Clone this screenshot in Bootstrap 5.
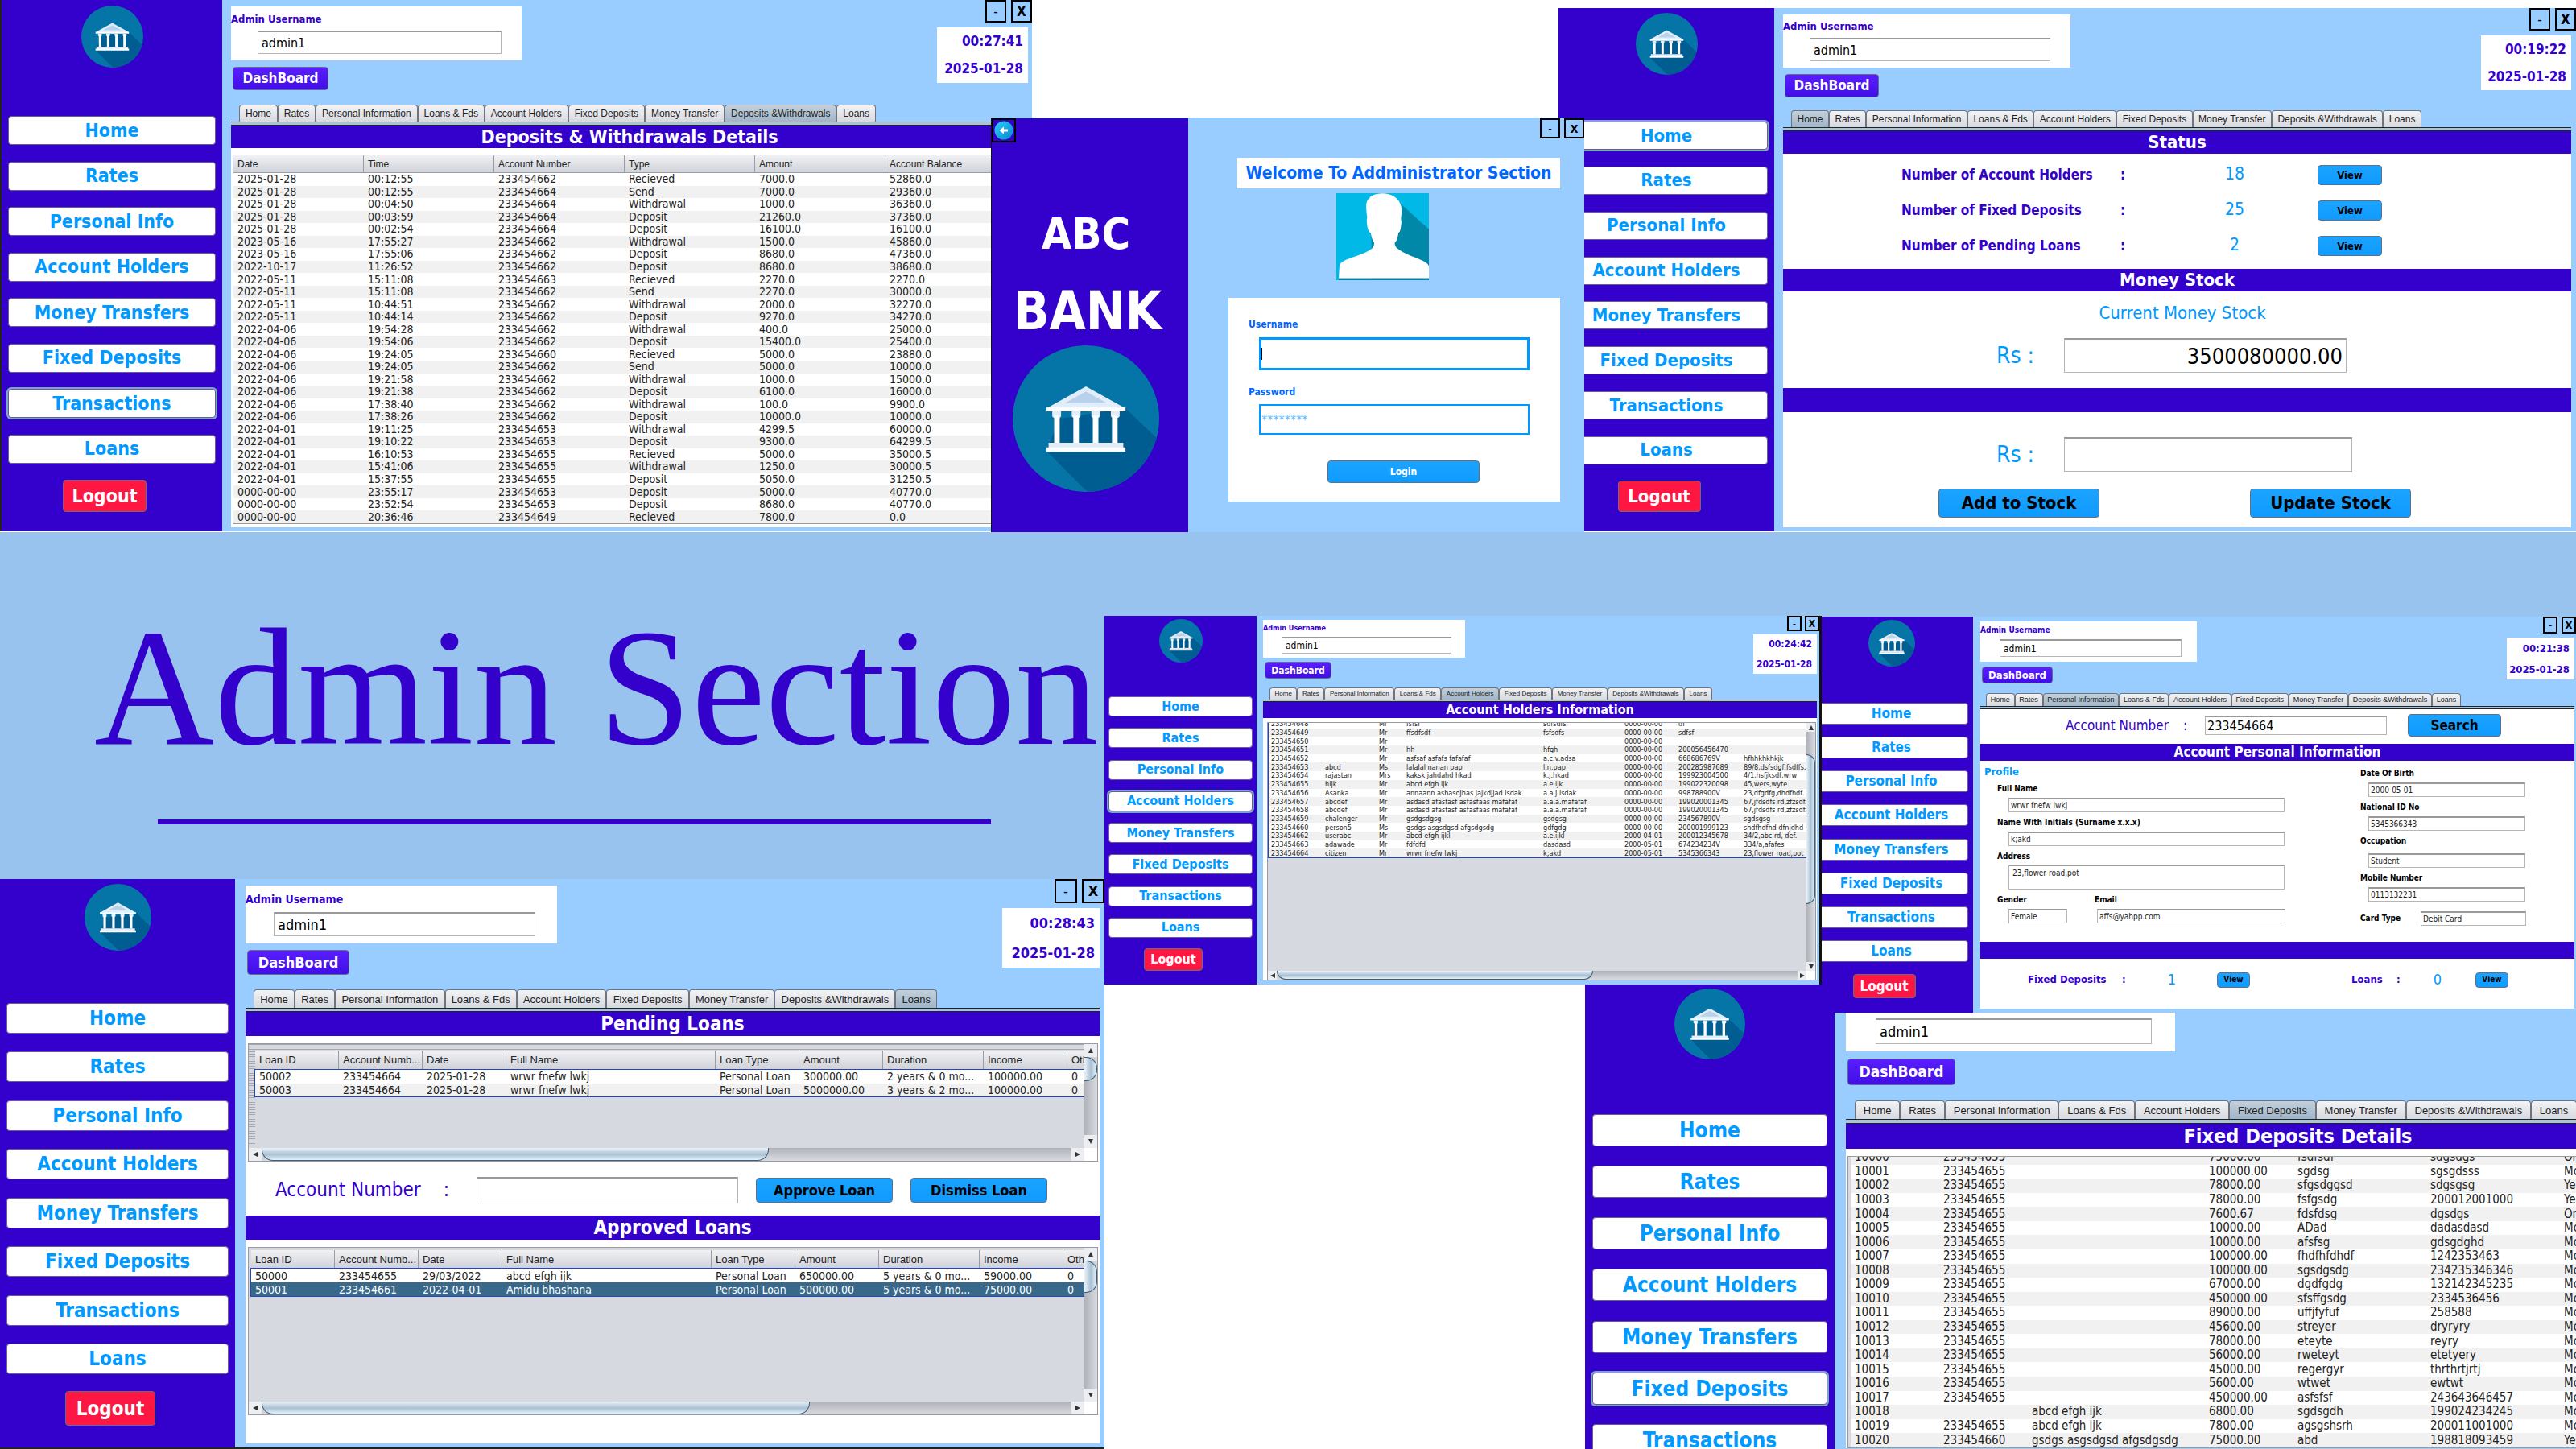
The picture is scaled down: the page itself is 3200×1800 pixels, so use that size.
<!DOCTYPE html>
<html lang="en">
<head>
<meta charset="utf-8">
<meta name="viewport" content="width=device-width, initial-scale=1">
<title>ABC Bank - Admin Section</title>
<link rel="stylesheet" href="https://cdn.jsdelivr.net/npm/bootstrap@5.3.0/dist/css/bootstrap.min.css">
<style>
:root{--ink:#3300cc;--sky:#99ccff;--azure:#0099ff}
body{background:#fff;color:#222;font-family:"DejaVu Sans Condensed","DejaVu Sans","Noto Sans",sans-serif;line-height:1.2}
.desk{position:relative;min-height:100vh;overflow:hidden;background:#fff}
.desk .btn{padding:0;line-height:1;border:1px solid #5f6f86;border-radius:4px;font-weight:700;white-space:nowrap}
.win{position:absolute;display:flex;background:var(--sky)}

/* section banner */
.banner{position:absolute;left:0;right:0;top:661px;height:431px;background:#99c3ef;padding:90px 0 0 117px}
.banner h1{font-family:"Liberation Serif",serif;font-size:207px;line-height:207px;color:var(--ink);margin:0;font-weight:400;white-space:nowrap}
.banner hr{width:1035px;height:6px;margin:60px 0 0 79px;border:0;background:var(--ink);opacity:1}

/* window placement and the sizes of each copy of the console */
.w-dep{left:0;top:0;right:1918px;min-height:660px;border-left:2px solid #222;
--side:274px;--inset:8px;--lt:7px;--logo:77px;--ng:60px;--nh:432px;--bh:36px;--nf:23px;--og:20px;--oh:40px;--ow:104px;
--pl:11px;--pr:5px;--ut:8px;--uh:67px;--uw:361px;--lf:13px;--im:33px;--iw:303px;--ih:29px;--if:16px;--ib:8px;
--dw:119px;--dh:29px;--df:17px;--tt:130px;--th:21px;--tm:10px;--tw:791px;--tf:12px;--sh:5px;--hh:28px;--hf:23px;
--cw:113px;--ch:69px;--cf:17px;--xw:26px;--xh:28px;--xg:6px}
.w-home{left:1936px;top:10px;right:0;min-height:650px;
--side:268px;--inset:8px;--lt:6px;--logo:77px;--ng:58px;--nh:426px;--bh:35px;--nf:22px;--og:20px;--oh:39px;--ow:103px;
--pl:11px;--pr:6px;--ut:8px;--uh:66px;--uw:357px;--lf:13px;--im:33px;--iw:299px;--ih:29px;--if:16px;--ib:8px;
--dw:117px;--dh:29px;--df:17px;--tt:127px;--th:21px;--tm:10px;--tw:783px;--tf:12px;--sh:5px;--hh:28px;--hf:22px;
--cw:112px;--ch:68px;--cf:17px;--xw:26px;--xh:28px;--xg:6px}
.w-hold{left:1372px;top:765px;right:937px;min-height:457px;border-right:3px solid #111;
--side:189px;--inset:5px;--lt:4px;--logo:54px;--ng:42px;--nh:300px;--bh:25px;--nf:16px;--og:13px;--oh:28px;--ow:73px;
--pl:8px;--pr:3px;--ut:5px;--uh:47px;--uw:251px;--lf:9px;--im:23px;--iw:211px;--ih:21px;--if:12px;--ib:5px;
--dw:83px;--dh:21px;--df:12px;--tt:89px;--th:15px;--tm:8px;--tw:550px;--tf:8px;--sh:3px;--hh:20px;--hf:16px;
--cw:79px;--ch:49px;--cf:12px;--xw:18px;--xh:19px;--xg:4px}
.w-pers{left:2248px;top:766px;right:0;min-height:491px;
--side:203px;--inset:6px;--lt:4px;--logo:58px;--ng:45px;--nh:322px;--bh:27px;--nf:17px;--og:15px;--oh:30px;--ow:78px;
--pl:9px;--pr:2px;--ut:6px;--uh:50px;--uw:269px;--lf:10px;--im:24px;--iw:226px;--ih:22px;--if:12px;--ib:6px;
--dw:88px;--dh:21px;--df:13px;--tt:95px;--th:16px;--tm:7px;--tw:590px;--tf:9px;--sh:4px;--hh:21px;--hf:17px;
--cw:84px;--ch:52px;--cf:13px;--xw:18px;--xh:21px;--xg:5px}
.w-loan{left:0;top:1092px;right:1828px;min-height:708px;border-bottom:2px solid #222;
--side:292px;--inset:8px;--lt:6px;--logo:83px;--ng:65px;--nh:461px;--bh:38px;--nf:24px;--og:21px;--oh:43px;--ow:112px;
--pl:13px;--pr:6px;--ut:8px;--uh:72px;--uw:387px;--lf:14px;--im:35px;--iw:325px;--ih:30px;--if:18px;--ib:9px;
--dw:127px;--dh:31px;--df:18px;--tt:137px;--th:23px;--tm:10px;--tw:849px;--tf:13px;--sh:5px;--hh:30px;--hf:24px;
--cw:121px;--ch:74px;--cf:18px;--xw:28px;--xh:30px;--xg:6px}
.w-fix{left:1969px;top:1222px;right:-222px;bottom:0;
--side:310px;--inset:9px;--lt:6px;--logo:88px;--ng:68px;--nh:489px;--bh:40px;--nf:26px;--og:22px;--oh:45px;--ow:118px;
--pl:14px;--pr:6px;--ut:9px;--uh:75px;--uw:409px;--lf:14px;--im:37px;--iw:343px;--ih:32px;--if:18px;--ib:9px;
--dw:134px;--dh:33px;--df:19px;--tt:145px;--th:23px;--tm:11px;--tw:897px;--tf:13px;--sh:6px;--hh:31px;--hf:25px;
--cw:128px;--ch:78px;--cf:19px;--xw:29px;--xh:32px;--xg:7px}

/* sidebar */
.side{flex:0 0 var(--side);background:var(--ink);padding:var(--lt) var(--inset) 0;display:flex;flex-direction:column;align-items:center}
.side svg{flex:none;width:var(--logo);height:var(--logo)}
.side-nav{align-self:stretch;margin-top:var(--ng);height:var(--nh);flex:none;display:flex;flex-direction:column;justify-content:space-between}
.side-nav .btn{height:var(--bh);background:#fff!important;color:var(--azure);font-size:var(--nf);border-color:#6b5a9a}
.side-nav .btn.on{box-shadow:0 0 0 2px #7ba6c9;color:var(--azure)}
.desk .btn.out{flex:none;margin:var(--og) 18px 0 0;width:var(--ow);height:var(--oh);font-size:var(--nf);background:#ff1744;color:#fff}

/* console header */
.main{flex:1 1 0;min-width:0;display:flex;flex-direction:column}
.head{height:var(--tt);flex:none;display:flex;justify-content:space-between;align-items:flex-start;padding-left:var(--pl)}
.ubox{margin-top:var(--ut);width:var(--uw);height:var(--uh);background:#fff;display:flex;flex-direction:column;padding-bottom:var(--ib)}
.ubox label{flex:1;display:flex;align-items:center;font-weight:700;font-size:var(--lf);color:var(--ink);line-height:1}
.fld{border:1px solid #b5b5b5;border-top:2px solid #999;border-radius:0;background:#fff;color:#000;padding:0 4px;min-width:0;display:block}
.ubox .fld{margin-left:var(--im);width:var(--iw);height:var(--ih);font-size:var(--if)}
.desk .btn.dash{margin:var(--ut) 0 0 2px;width:var(--dw);height:var(--dh);font-size:var(--df);color:#fff;background:linear-gradient(#5a1eff,#410ee6)}
.wctl{display:flex;justify-content:flex-end;gap:var(--xg)}
.desk .wctl .btn{width:var(--xw);height:var(--xh);border:2px solid #000;border-radius:0;font-size:var(--cf);color:#000}
.desk .wctl .btn:first-child{font-weight:400}
.clock{margin:var(--xg) var(--pr) 0 auto;width:var(--cw);height:var(--ch);background:#fff;color:var(--ink);font-weight:700;font-size:var(--cf);line-height:1;display:flex;flex-direction:column;justify-content:space-around;align-items:flex-end;padding-right:6px}
.tabs{flex:none;height:var(--th);width:var(--tw);margin-left:calc(var(--pl) + var(--tm));display:flex}
.tabs button{flex:1 1 auto;padding:0;border:1px solid #6f747c;border-bottom:0;border-radius:4px 4px 0 0;background:linear-gradient(#f3f3f5,#d6d9df);font:var(--tf)/1 "Liberation Sans",Arial,sans-serif;color:#222;white-space:nowrap}
.tabs button.on{background:linear-gradient(#c3d0db,#a0b5c9)}
.rule{flex:none;height:var(--sh);margin:0 var(--pr) 0 var(--pl);background:#a9c3d8;border-top:1px solid #222;border-bottom:1px solid #222}
.body{flex:1;margin:0 var(--pr) 5px var(--pl);background:#fff;display:flex;flex-direction:column;min-width:0}
.bar{flex:none;height:var(--hh);background:var(--ink);color:#fff;font-weight:700;font-size:var(--hf);line-height:var(--hh);text-align:center;margin:0}

/* tables and scroll panes */
.pane{position:relative;border:1px solid #979aa3;background:#d6d9e0;overflow:hidden;display:grid}
.pane.bars{grid-template-columns:minmax(0,1fr) var(--sb);grid-template-rows:minmax(0,1fr) var(--sb)}
.view{overflow:hidden;min-width:0}
.grid-t{table-layout:fixed;border-collapse:separate;border-spacing:0;background:#fff;color:#222}
.grid-t td,.grid-t th{padding:0 0 0 5px;white-space:nowrap;overflow:hidden}
.grid-t th{font:400 var(--tf)/1 "Liberation Sans",Arial,sans-serif;background:linear-gradient(#f2f2f4,#cfd2d9);border-right:1px solid #9a9da6;border-bottom:1px solid #9a9da6;height:var(--hd);text-overflow:ellipsis}
.grid-t td{font-size:var(--fs);line-height:var(--lh)}
.grid-t tbody tr:nth-child(even) td{background:#f1f1f1}
.grid-t tbody tr.pick td{background:#39698a;color:#fff}
.p-dep{--fs:14px;--lh:15px;--hd:22px;margin:8px 0 0 2px}
.p-dep .grid-t{height:457px}
.p-hold{--fs:9px;--lh:10px;--sb:11px;margin:5px 1px 0 5px;height:321px}
.p-hold .grid-t{height:172px;margin-top:-4px;border-bottom:1px solid #2046c8;border-left:1px solid #2046c8}
.p-hold .grid-t td{padding-left:3px}
.p-fix{--fs:15px;--lh:17px;margin:9px 0 0 2px;padding-left:3px;flex:1}
.p-fix .grid-t{height:369px;margin-top:-8px}
.p-fix .grid-t tbody tr:nth-child(odd) td{background:#f1f1f1}
.p-fix .grid-t tbody tr:nth-child(even) td{background:#fff}
.p-pend,.p-appr{--fs:14px;--lh:16px;--sb:16px;margin:9px 2px 0 3px}
.p-pend{--hd:24px;height:147px}
.p-pend .view{padding:8px 0 0 8px;background:repeating-linear-gradient(#a4a7af 0 1px,#d6d9e0 1px 3px)}
.p-pend .fill{background:#d6d9e0;height:100%}
.p-appr{--hd:23px;height:209px}
.p-appr .view{padding:3px 0 0 3px}
.p-pend tbody,.p-appr tbody{outline:1px solid #2046c8}
.p-pend .grid-t,.p-appr .grid-t{height:57px}
.hbar,.vbar{display:flex;background:linear-gradient(#aeb1b8,#d9dbe0)}
.vbar{flex-direction:column;background:linear-gradient(90deg,#aeb1b8,#d9dbe0)}
.hbar i,.vbar i{flex:none;background:#eceef1;display:flex;align-items:center;justify-content:center}
.hbar i{width:var(--sb)}.vbar i{height:var(--sb)}
.hbar svg,.vbar svg{width:8px;height:8px;fill:#333}
.knob{flex:none;border:1px solid #3e5e78;background:linear-gradient(#eaf2f8,#a9c1d4 55%,#e3f3fb)}
.hbar .knob{border-top:0;border-radius:0 0 14px 14px}
.vbar .knob{border-left:0;border-radius:0 14px 14px 0;background:linear-gradient(90deg,#eaf2f8,#a9c1d4 55%,#e3f3fb)}
.corner{background:#fff}
.p-pend .hbar .knob{width:630px}.p-appr .hbar .knob{width:681px}.p-hold .hbar .knob{width:393px}
.p-pend .vbar .knob{height:30px}.p-appr .vbar .knob{height:40px}.p-hold .vbar .knob{height:186px;margin-top:28px}
.desk .btn.blue{background:linear-gradient(#1ba3ff,#0f9bff);color:#000}
.t-az{color:var(--azure)}

/* home status */
.st-rows{height:143px;padding:4px 0 0 147px}
.st-row{display:flex;align-items:center;height:44px;font-size:17px;font-weight:700;color:var(--ink)}
.st-row span:nth-child(1){width:272px}.st-row span:nth-child(2){width:39px}
.st-row span:nth-child(3){width:206px;text-align:center;font-size:21px;font-weight:400;color:var(--azure)}
.st-row .btn{width:80px;height:25px;font-size:13px}
.stock{height:120px;padding-top:13px}
.stock p{font-size:22px;line-height:28px;margin:0 0 17px 13px;text-align:center}
.rs{display:flex;align-items:center;padding-left:265px}
.rs label{width:84px;font-size:28px;line-height:1;color:var(--azure)}
.rs .fld{height:43px;font-size:27px;text-align:right}
.f-now{width:351px}.f-add{width:358px}
.blank{height:30px}
.more{padding-top:31px}
.acts{display:flex;gap:187px;padding:21px 0 0 193px}
.acts .btn{width:200px;height:36px;font-size:22px}

/* loans */
.decide{height:67px;display:flex;align-items:center;padding:4px 0 0 37px}
.decide label{width:250px;font-size:24px;color:var(--ink);display:flex;gap:28px;white-space:nowrap}
.decide .fld{width:325px;height:33px;font-size:20px}
.decide .btn{width:170px;height:31px;font-size:18px;margin-left:22px}

/* personal information */
.find{height:43px;padding:0 0 3px 106px;display:flex;align-items:center}
.find label{width:173px;font-size:17px;color:var(--ink);display:flex;gap:18px;white-space:nowrap}
.find .fld{width:226px;height:24px;font-size:16px;padding:0 2px}
.find .btn{width:116px;height:28px;font-size:17px;margin-left:26px}
.prof{height:225px;display:flex}
.p-left{width:472px;padding:6px 0 0 5px}
.p-left h3{font-size:13px;line-height:16px;margin:0 0 3px;font-weight:700;color:var(--azure)}
.p-left .grp{margin:7px 0 0 16px}
.p-left .grp .fld{margin-left:14px}
.grp label,.p-card label{display:block;font-size:10px;line-height:12px;font-weight:700;color:#000;margin-bottom:5px;white-space:nowrap}
.prof .fld{height:18px;font-size:10px;padding:0 2px;color:#222}
.prof textarea.fld{height:30px;resize:none;overflow:hidden;line-height:14px;padding:2px 4px;border-top-width:1px}
.f-wide{width:343px}.f-gen{width:73px}.f-mail{width:234px}
.p-left .grp.mail{margin-left:34px}
.p-left .grp.mail .fld{margin-left:3px}
.p-right{padding-top:10px}
.p-right .grp{margin-bottom:7px}
.p-right .grp .fld{width:195px;margin-left:10px}
.p-right .grp.roomy label{margin-bottom:9px}
.p-card{display:flex;align-items:center;margin-top:12px}
.p-card label{width:75px;margin:0}
.p-card .fld{width:131px}
.tally{height:62px;padding:0 0 10px 59px;display:flex;align-items:center;font-size:13px;font-weight:700;color:var(--ink)}
.tally b{width:117px}.tally b.sm{width:56px;margin-left:126px}
.tally i{width:24px;font-style:normal}
.tally em{width:76px;margin-right:18px;font:400 18px/1 "DejaVu Sans Condensed","DejaVu Sans",sans-serif;color:var(--azure);text-align:center}
.tally b.sm~i{width:20px}.tally b.sm~em{width:62px;margin-right:16px}
.tally .btn{width:41px;height:19px;font-size:10px}

/* login */
.w-log{left:1231px;top:146px;right:1232px;height:515px;border-left:1px solid #111;border-top:1px solid #7fb2e6;--xw:25px;--xh:25px;--xg:5px;--cf:14px}
.l-side{width:244px;flex:none;background:var(--ink);color:#fff;display:flex;flex-direction:column;align-items:center;padding-right:10px}
.desk .btn.back{align-self:flex-start;width:30px;height:30px;border:2px solid #000;border-radius:0;display:flex;align-items:center;justify-content:center}
.l-side b{font-size:54px;line-height:64px;margin-top:82px}
.l-side b+b{font-size:65px;line-height:76px;margin:26px 0 4px;padding-left:4px}
.l-main{flex:1;display:flex;flex-direction:column;align-items:flex-end}
.l-title{margin:24px 30px 0 0;width:401px;height:38px;line-height:38px;background:#fff;text-align:center;font-size:21px;font-weight:700;color:#0066ff;white-space:nowrap}
.face{margin:6px 193px 0 0;width:115px;height:108px}
.l-form{margin:22px 30px 0 0;width:412px;height:253px;background:#fff;padding:25px 0 0 25px}
.l-form label{display:block;font-size:12px;line-height:16px;font-weight:700;color:#0066ff}
.l-form input{display:block;border:2px solid var(--azure);border-radius:0;width:336px;height:38px;margin:7px 0 0 13px;padding:0 1px;font-size:16px;color:#4db5ff}
.l-form input::placeholder{color:#66bdff;opacity:1}
.l-form .caret{position:relative;margin:8px 0 19px 13px}
.l-form .caret input{height:41px;border-width:3px;margin:0}
.l-form .caret::after{content:"";position:absolute;left:3px;top:13px;width:1px;height:15px;background:#000}
.desk .btn.login{margin:32px 0 0 98px;width:189px;height:28px;font-size:12px;color:#fff}
</style>
<script src="https://cdn.jsdelivr.net/npm/bootstrap@5.3.0/dist/js/bootstrap.bundle.min.js"></script>
</head>
<body>
<svg class="d-none" aria-hidden="true">
<symbol id="bank" viewBox="0 0 100 100">
<circle cx="50" cy="50" r="50" fill="#0575a7"/>
<path d="M77 43 98 63A50 50 0 0 1 51 100L23 72 32 50Z" fill="#005d92"/>
<path d="M50 28 77 43H23Z" fill="#e1edf8"/><path d="M50 31.500 64.500 39.500H35.500Z" fill="#b9d1ea"/>
<path d="M23 42.400H77V45H23Z" fill="#fff"/>
<path d="M27 45h6v3.500l-1 1h-4l-1-1zM40.300 45h6v3.500l-1 1h-4l-1-1zM53.700 45h6v3.500l-1 1h-4l-1-1zM67 45h6v3.500l-1 1h-4l-1-1z" fill="#e1edf8"/>
<path d="M28.300 48h3.800v19h-3.800zM41.400 48h3.800v19h-3.800zM54.700 48h3.800v19h-3.800zM67.800 48h3.800v19h-3.800z" fill="#fff"/>
<path d="M24.500 66.500H75.500V70H24.500Z" fill="#e1edf8"/><path d="M23 69.600H77V72.500H23Z" fill="#fff"/>
</symbol>
<symbol id="tl" viewBox="0 0 8 8"><path d="M7 1V7L1 4Z"/></symbol>
<symbol id="tr" viewBox="0 0 8 8"><path d="M1 1V7L7 4Z"/></symbol>
<symbol id="tu" viewBox="0 0 8 8"><path d="M1 7H7L4 1Z"/></symbol>
<symbol id="td" viewBox="0 0 8 8"><path d="M1 1H7L4 7Z"/></symbol>
</svg>

<div class="desk">
  <section class="banner"><h1>Admin Section</h1><hr></section>

  <!-- Fixed deposits -->
  <section class="win w-fix" data-id="fix" data-nav="Fixed Deposits" data-tab="Fixed Deposits" data-time="00:25:50">
    <div class="body">
      <h2 class="bar">Fixed Deposits Details</h2>
      <div class="pane p-fix"><div class="view"><table class="grid-t" data-table="fix"></table></div></div>
    </div>
  </section>

  <!-- Personal information -->
  <section class="win w-pers" data-id="pers" data-nav="" data-tab="Personal Information" data-time="00:21:38">
    <div class="body">
      <div class="find"><label for="p-acc"><span>Account Number</span><span>:</span></label><input class="fld" id="p-acc" value="233454664"><button class="btn blue">Search</button></div>
      <h2 class="bar">Account Personal Information</h2>
      <div class="prof">
        <div class="p-left">
          <h3>Profile</h3>
          <div class="grp"><label for="p-fn">Full Name</label><input class="fld f-wide" id="p-fn" value="wrwr fnefw lwkj"></div>
          <div class="grp"><label for="p-in">Name With Initials (Surname x.x.x)</label><input class="fld f-wide" id="p-in" value="k;akd"></div>
          <div class="grp"><label for="p-ad">Address</label><textarea class="fld f-wide" id="p-ad">23,flower road,pot</textarea></div>
          <div class="d-flex">
            <div class="grp"><label for="p-ge">Gender</label><input class="fld f-gen" id="p-ge" value="Female"></div>
            <div class="grp mail"><label for="p-em">Email</label><input class="fld f-mail" id="p-em" value="affs@yahpp.com"></div>
          </div>
        </div>
        <div class="p-right">
          <div class="grp"><label for="p-db">Date Of Birth</label><input class="fld" id="p-db" value="2000-05-01"></div>
          <div class="grp"><label for="p-ni">National ID No</label><input class="fld" id="p-ni" value="5345366343"></div>
          <div class="grp roomy"><label for="p-oc">Occupation</label><input class="fld" id="p-oc" value="Student"></div>
          <div class="grp"><label for="p-mo">Mobile Number</label><input class="fld" id="p-mo" value="0113132231"></div>
          <div class="p-card"><label for="p-ct">Card Type</label><input class="fld" id="p-ct" value="Debit Card"></div>
        </div>
      </div>
      <div class="bar"></div>
      <div class="tally"><b>Fixed Deposits</b><i>:</i><em>1</em><button class="btn blue">View</button><b class="sm">Loans</b><i>:</i><em>0</em><button class="btn blue">View</button></div>
    </div>
  </section>

  <!-- Account holders -->
  <section class="win w-hold" data-id="hold" data-nav="Account Holders" data-tab="Account Holders" data-time="00:24:42">
    <div class="body">
      <h2 class="bar">Account Holders Information</h2>
      <div class="pane bars p-hold"><div class="view"><table class="grid-t" data-table="hold"></table></div></div>
    </div>
  </section>

  <!-- Loans -->
  <section class="win w-loan" data-id="loan" data-nav="" data-tab="Loans" data-time="00:28:43">
    <div class="body">
      <h2 class="bar">Pending Loans</h2>
      <div class="pane bars p-pend"><div class="view"><div class="fill"><table class="grid-t" data-table="pend"></table></div></div></div>
      <div class="decide"><label for="l-acc"><span>Account Number</span><span>:</span></label><input class="fld" id="l-acc"><button class="btn blue">Approve Loan</button><button class="btn blue">Dismiss Loan</button></div>
      <h2 class="bar">Approved Loans</h2>
      <div class="pane bars p-appr"><div class="view"><table class="grid-t" data-table="appr"></table></div></div>
    </div>
  </section>

  <!-- Deposits and withdrawals -->
  <section class="win w-dep" data-id="dep" data-nav="Transactions" data-tab="Deposits &amp;Withdrawals" data-time="00:27:41">
    <div class="body">
      <h2 class="bar">Deposits &amp; Withdrawals Details</h2>
      <div class="pane p-dep"><div class="view"><table class="grid-t" data-table="dep"></table></div></div>
    </div>
  </section>

  <!-- Home -->
  <section class="win w-home" data-id="home" data-nav="Home" data-tab="Home" data-time="00:19:22">
    <div class="body">
      <h2 class="bar">Status</h2>
      <div class="st-rows">
        <div class="st-row"><span>Number of Account Holders</span><span>:</span><span>18</span><button class="btn blue">View</button></div>
        <div class="st-row"><span>Number of Fixed Deposits</span><span>:</span><span>25</span><button class="btn blue">View</button></div>
        <div class="st-row"><span>Number of Pending Loans</span><span>:</span><span>2</span><button class="btn blue">View</button></div>
      </div>
      <h2 class="bar">Money Stock</h2>
      <div class="stock">
        <p class="t-az">Current Money Stock</p>
        <div class="rs"><label for="h-now">Rs :</label><input class="fld f-now" id="h-now" value="3500080000.00"></div>
      </div>
      <div class="bar blank"></div>
      <div class="more">
        <div class="rs"><label for="h-add">Rs :</label><input class="fld f-add" id="h-add"></div>
        <div class="acts"><button class="btn blue">Add to Stock</button><button class="btn blue">Update Stock</button></div>
      </div>
    </div>
  </section>

  <!-- Login -->
  <section class="win w-log">
    <div class="l-side">
      <button class="btn back" aria-label="Back"><svg width="24" height="24" viewBox="0 0 24 24"><defs><linearGradient id="g" x2="1" y2="1"><stop stop-color="#2fd0f5"/><stop offset="1" stop-color="#0585d0"/></linearGradient></defs><circle cx="12" cy="12" r="11.500" fill="url(#g)"/><path d="M6.500 12 12 7.500V10.500H17V13.500H12V16.500Z" fill="#fff"/></svg></button>
      <b>ABC</b><b>BANK</b>
      <svg width="182" height="182"><use href="#bank"/></svg>
    </div>
    <div class="l-main">
      <div class="wctl"><button class="btn">-</button><button class="btn">X</button></div>
      <div class="l-title">Welcome To Addministrator Section</div>
      <svg class="face" viewBox="0 0 237 313" preserveAspectRatio="none">
        <path d="M0 0H237V313H0Z" fill="#00b9e6"/><path d="M160 32 237 130V313H90V150Z" fill="#0088a8"/><path d="M6 306H237V313H6Z" fill="#0a7f9e"/>
        <path d="M118 1C98 1 86 12 85 18C74 26 76 55 79 88C76 100 80 142 88 142C90 155 91 168 97 178C97 200 85 205 75 213C40 235 8 240 8 265L6 306H237V262C232 240 190 230 165 207C155 200 148 190 150 178C156 170 158 155 159 142C165 140 165 120 167 104C164 92 167 85 167 65C169 25 145 1 118 1Z" fill="#fff"/>
      </svg>
      <form class="l-form">
        <label for="u">Username</label>
        <div class="caret"><input id="u" type="text"></div>
        <label for="pw">Password</label>
        <input id="pw" type="text" placeholder="********">
        <button type="button" class="btn blue login">Login</button>
      </form>
    </div>
  </section>
</div>

<script>
const NAV=["Home","Rates","Personal Info","Account Holders","Money Transfers","Fixed Deposits","Transactions","Loans"];
const TABS=["Home","Rates","Personal Information","Loans & Fds","Account Holders","Fixed Deposits","Money Transfer","Deposits &Withdrawals","Loans"];
const esc=s=>s.replace(/&/g,"&amp;");
const rows=s=>s.trim().split("\n").map(r=>r.split("|"));

const DATA={
dep:{cols:[162,162,162,162,162,172],head:"Date|Time|Account Number|Type|Amount|Account Balance".split("|"),rows:rows(`
2025-01-28|00:12:55|233454662|Recieved|7000.0|52860.0
2025-01-28|00:12:55|233454664|Send|7000.0|29360.0
2025-01-28|00:04:50|233454664|Withdrawal|1000.0|36360.0
2025-01-28|00:03:59|233454664|Deposit|21260.0|37360.0
2025-01-28|00:02:54|233454664|Deposit|16100.0|16100.0
2023-05-16|17:55:27|233454662|Withdrawal|1500.0|45860.0
2023-05-16|17:55:06|233454662|Deposit|8680.0|47360.0
2022-10-17|11:26:52|233454662|Deposit|8680.0|38680.0
2022-05-11|15:11:08|233454663|Recieved|2270.0|2270.0
2022-05-11|15:11:08|233454662|Send|2270.0|30000.0
2022-05-11|10:44:51|233454662|Withdrawal|2000.0|32270.0
2022-05-11|10:44:14|233454662|Deposit|9270.0|34270.0
2022-04-06|19:54:28|233454662|Withdrawal|400.0|25000.0
2022-04-06|19:54:06|233454662|Deposit|15400.0|25400.0
2022-04-06|19:24:05|233454660|Recieved|5000.0|23880.0
2022-04-06|19:24:05|233454662|Send|5000.0|10000.0
2022-04-06|19:21:58|233454662|Withdrawal|1000.0|15000.0
2022-04-06|19:21:38|233454662|Deposit|6100.0|16000.0
2022-04-06|17:38:40|233454662|Withdrawal|100.0|9900.0
2022-04-06|17:38:26|233454662|Deposit|10000.0|10000.0
2022-04-01|19:11:25|233454653|Withdrawal|4299.5|60000.0
2022-04-01|19:10:22|233454653|Deposit|9300.0|64299.5
2022-04-01|16:10:53|233454655|Recieved|5000.0|35000.5
2022-04-01|15:41:06|233454655|Withdrawal|1250.0|30000.5
2022-04-01|15:37:55|233454655|Deposit|5050.0|31250.5
0000-00-00|23:55:17|233454653|Deposit|5000.0|40770.0
0000-00-00|23:52:54|233454653|Deposit|8680.0|40770.0
0000-00-00|20:36:46|233454649|Recieved|7800.0|0.0`)},
hold:{cols:[67,67,34,170,101,67,81,90],rows:rows(`
233454648||Mr|fsfsf|sdfsdfs|0000-00-00|df|
233454649||Mr|ffsdfsdf|fsfsdfs|0000-00-00|sdfsf|
233454650||Mr|||0000-00-00||
233454651||Mr|hh|hfgh|0000-00-00|200056456470|
233454652||Mr|asfsaf asfafs fafafaf|a.c.v.adsa|0000-00-00|668686769V|hfhhkhkhkjk
233454653|abcd|Ms|lalalal nanan pap|l.n.pap|0000-00-00|200285987689|89/8,dsfsdgf,fsdffs.
233454654|rajastan|Mrs|kaksk jahdahd hkad|k.j.hkad|0000-00-00|199923004500|4/1,hsfjksdf,wrw
233454655|hijk|Mr|abcd efgh ijk|a.e.ijk|0000-00-00|199022320098|45,wers,wyte.
233454656|Asanka|Mr|annaann ashasdjhas jajkdjjad lsdak|a.a.j.lsdak|0000-00-00|998788900V|23,dfgdfg,dhdfhdf.
233454657|abcdef|Mr|asdasd afasfasf asfasfaas mafafaf|a.a.a.mafafaf|0000-00-00|199020001345|67,jfdsdfs rd,zfzsdf.
233454658|abcdef|Mr|asdasd afasfasf asfasfaas mafafaf|a.a.a.mafafaf|0000-00-00|199020001345|67,jfdsdfs rd,zfzsdf.
233454659|chalenger|Mr|gsdgsdgsg|gsdgsg|0000-00-00|234567890V|sgdsgsg
233454660|person5|Ms|gsdgs asgsdgsd  afgsdgsdg|gdfgdg|0000-00-00|200001999123|shdfhdfhd dfnjdhd d
233454662|userabc|Mr|abcd efgh ijkl|a.e.ijkl|2000-04-01|200012345678|34/2,abc rd, def.
233454663|adawade|Mr|fdfdfd|dasdasd|2000-05-01|674234234V|334/a,afafes
233454664|citizen|Mr|wrwr fnefw lwkj|k;akd|2000-05-01|5345366343|23,flower road,pot`)},
fix:{cols:[110,110,220,110,165,166,200],rows:rows(`
10000|233454655||75000.00|fsdfsdf|sdgsdgs|One Year
10001|233454655||100000.00|sgdsg|sgsgdsss|Month
10002|233454655||78000.00|sfgsdggsd|sdgsgsg|Year
10003|233454655||78000.00|fsfgsdg|200012001000|Year
10004|233454655||7600.67|fdsfdsg|dgsdgs|One Year
10005|233454655||10000.00|ADad|dadasdasd|Month
10006|233454655||10000.00|afsfsg|gdsgdghd|Month
10007|233454655||100000.00|fhdfhfdhdf|1242353463|Month
10008|233454655||100000.00|sgsdgsdg|234235346346|Month
10009|233454655||67000.00|dgdfgdg|132142345235|Month
10010|233454655||450000.00|sfsffgsdg|2334536456|Month
10011|233454655||89000.00|uffjfyfuf|258588|Month
10012|233454655||45600.00|streyer|dryryry|Month
10013|233454655||78000.00|eteyte|reyry|Month
10014|233454655||56000.00|rweteyt|etetyery|Month
10015|233454655||45000.00|regergyr|thrthrtjrtj|Month
10016|233454655||5600.00|wtwet|ewtwt|Month
10017|233454655||450000.00|asfsfsf|243643646457|Month
10018||abcd efgh ijk|6800.00|sgdsgdh|199024234245|Month
10019|233454655|abcd efgh ijk|7800.00|agsgshsrh|200011001000|Month
10020|233454660|gsdgs asgsdgsd  afgsdgsdg|75000.00|abd|198818093459|Year`)},
pend:{cols:[104,104,104,260,104,104,125,104,110],head:"Loan ID|Account Numb...|Date|Full Name|Loan Type|Amount|Duration|Income|Other".split("|"),rows:rows(`
50002|233454664|2025-01-28|wrwr fnefw lwkj|Personal Loan|300000.00|2 years & 0 mo...|100000.00|0
50003|233454664|2025-01-28|wrwr fnefw lwkj|Personal Loan|5000000.00|3 years & 2 mo...|100000.00|0`)},
appr:{pick:1,cols:[104,104,104,260,104,104,125,104,110],head:"Loan ID|Account Numb...|Date|Full Name|Loan Type|Amount|Duration|Income|Other".split("|"),rows:rows(`
50000|233454655|29/03/2022|abcd efgh ijk|Personal Loan|650000.00|5 years & 0 mo...|59000.00|0
50001|233454661|2022-04-01|Amidu bhashana|Personal Loan|500000.00|5 years & 0 mo...|75000.00|0`)}
};

document.querySelectorAll("[data-table]").forEach(t=>{
  const d=DATA[t.dataset.table];
  t.style.width=d.cols.reduce((a,b)=>a+b)+"px";
  t.innerHTML="<colgroup>"+d.cols.map(w=>`<col style="width:${w}px">`).join("")+"</colgroup>"
   +(d.head?"<thead><tr>"+d.head.map(h=>`<th>${h}</th>`).join("")+"</tr></thead>":"")
   +"<tbody>"+d.rows.map((r,i)=>`<tr${d.pick===i?' class="pick"':""}>`+r.map(c=>`<td>${esc(c)}</td>`).join("")+"</tr>").join("")+"</tbody>";
});

const arrow=n=>`<i><svg><use href="#${n}"/></svg></i>`;
document.querySelectorAll(".pane.bars").forEach(p=>p.insertAdjacentHTML("beforeend",
 `<div class="vbar">${arrow("tu")}<div class="knob"></div><div class="flex-fill"></div>${arrow("td")}</div>
  <div class="hbar">${arrow("tl")}<div class="knob"></div><div class="flex-fill"></div>${arrow("tr")}</div><div class="corner"></div>`));

document.querySelectorAll(".win[data-id]").forEach(w=>{
  const {id,nav,tab,time}=w.dataset, body=w.querySelector(".body");
  const main=document.createElement("div");
  main.className="main";
  main.innerHTML=`<header class="head">
    <div><div class="ubox"><label for="u-${id}">Admin Username</label><input class="fld" id="u-${id}" value="admin1"></div>
    <button class="btn dash">DashBoard</button></div>
    <div><div class="wctl"><button class="btn">-</button><button class="btn">X</button></div>
    <div class="clock"><span>${time}</span><span>2025-01-28</span></div></div></header>
    <div class="tabs" role="tablist">${TABS.map(t=>`<button role="tab" class="${t===tab?"on":""}">${esc(t)}</button>`).join("")}</div>
    <div class="rule"></div>`;
  main.append(body);
  w.innerHTML=`<aside class="side"><svg><use href="#bank"/></svg>
    <nav class="side-nav">${NAV.map(n=>`<button class="btn${n===nav?" on":""}">${n}</button>`).join("")}</nav>
    <button class="btn out">Logout</button></aside>`;
  w.append(main);
});
</script>
</body>
</html>
